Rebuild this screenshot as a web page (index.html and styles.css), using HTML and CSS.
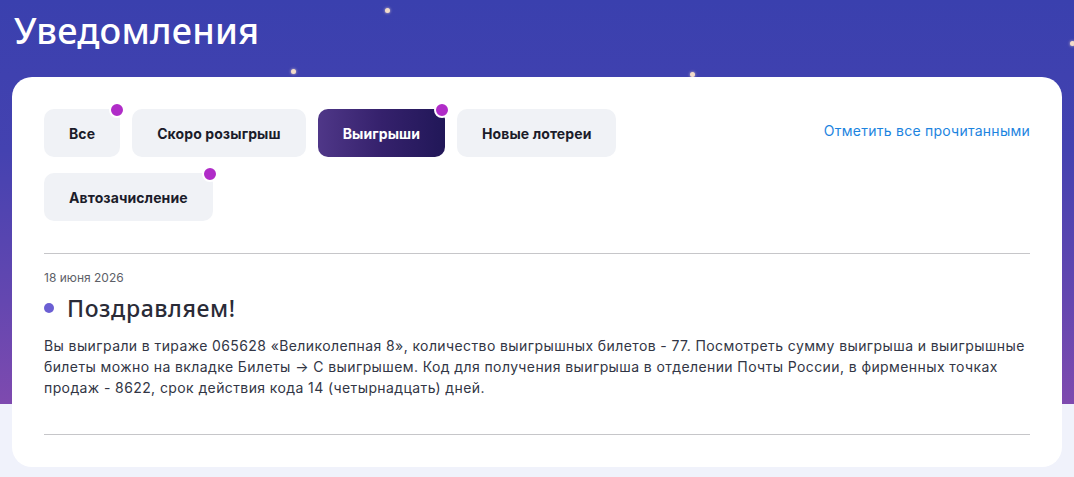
FILE: index.html
```html
<!DOCTYPE html>
<html lang="ru">
<head>
    <meta charset="UTF-8">
    <meta name="viewport" content="width=device-width, initial-scale=1.0">
    <title>Уведомления</title>
    <link rel="stylesheet" href="styles.css">
</head>
<body>
    <div class="stars">
        <span class="star" style="left:385px;top:8px"></span>
        <span class="star" style="left:291px;top:69px"></span>
        <span class="star" style="left:690px;top:72px"></span>
        <span class="star" style="left:1070px;top:41px"></span>
    </div>

    <h1 class="page-title">Уведомления</h1>

    <div class="card">
        <div class="toolbar">
            <div class="tabs">
                <button class="tab has-new">Все</button>
                <button class="tab">Скоро розыгрыш</button>
                <button class="tab active has-new">Выигрыши</button>
                <button class="tab">Новые лотереи</button>
                <button class="tab has-new">Автозачисление</button>
            </div>
            <a class="mark-read" href="#">Отметить все прочитанными</a>
        </div>

        <div class="notice">
            <div class="notice-date">18 июня 2026</div>
            <h3 class="notice-title"><span class="unread-dot"></span>Поздравляем!</h3>
            <p class="notice-text">Вы выиграли в тираже 065628 «Великолепная 8», количество выигрышных билетов - 77. Посмотреть сумму выигрыша и выигрышные билеты можно на вкладке Билеты → С выигрышем. Код для получения выигрыша в отделении Почты России, в фирменных точках продаж - 8622, срок действия кода 14 (четырнадцать) дней.</p>
        </div>
    </div>
</body>
</html>
```

FILE: styles.css
```css
:root {
    --blue: #3a40ae;
    --purple: #7e4aaf;
    --page: #f0f2fb;
    --tab-bg: #f0f2f6;
    --dot: #b02cc8;
    --text: #2b2f3d;
    --link: #1c84df;
}

* {
    margin: 0;
    padding: 0;
    box-sizing: border-box;
}

body {
    font-family: 'Inter', 'Noto Sans', sans-serif;
    color: var(--text);
    min-height: 100vh;
    background: linear-gradient(180deg, var(--blue) 0, #4442b0 150px, #6447b0 300px, var(--purple) 404px, var(--page) 404px);
    padding-bottom: 12px;
}

.stars {
    position: absolute;
    inset: 0;
    pointer-events: none;
}

.star {
    position: absolute;
    width: 5px;
    height: 5px;
    border-radius: 50%;
    background: #f3dcc9;
    box-shadow: 0 0 3px rgba(255,230,210,0.8);
}

.page-title {
    font-family: 'Noto Sans', sans-serif;
    font-weight: 500;
    font-size: 36px;
    line-height: 44px;
    letter-spacing: 0.2px;
    color: #fff;
    padding: 9px 14px 24px;
}

.card {
    position: relative;
    background: #fff;
    margin: 0 12px;
    border-radius: 20px;
    padding: 32px 32px 32px;
}

.toolbar {
    display: flex;
    justify-content: space-between;
    align-items: flex-start;
    gap: 24px;
    padding-bottom: 32px;
    border-bottom: 1px solid #c6c6c9;
}

.tabs {
    display: flex;
    flex-wrap: wrap;
    gap: 16px 12px;
    flex: 1;
    max-width: 740px;
}

.tab {
    position: relative;
    height: 48px;
    padding: 0 25px;
    border: none;
    border-radius: 10px;
    background: var(--tab-bg);
    font-family: 'Inter', sans-serif;
    font-size: 14px;
    font-weight: 700;
    letter-spacing: 0.1px;
    color: #1b1c2a;
    cursor: pointer;
}

.tab.active {
    background: linear-gradient(90deg, #4f3788 0%, #35216c 50%, #211758 100%);
    color: #fff;
}

.tab.has-new::after {
    content: '';
    position: absolute;
    top: -7px;
    right: -5px;
    width: 12px;
    height: 12px;
    border-radius: 50%;
    background: var(--dot);
    border: 2px solid #fff;
}

.mark-read {
    color: var(--link);
    text-decoration: none;
    font-size: 14px;
    letter-spacing: 0.25px;
    line-height: 44px;
    white-space: nowrap;
}

.notice {
    padding: 16px 0 36px;
    border-bottom: 1px solid #c6c6c9;
}

.notice-date {
    font-size: 12px;
    line-height: 16px;
    color: #5d5f68;
}

.notice-title {
    display: flex;
    align-items: center;
    margin: 7px 0 12px;
    font-family: 'Noto Sans', sans-serif;
    font-weight: 500;
    font-size: 23px;
    line-height: 30px;
    letter-spacing: 0.6px;
    color: #2a2b37;
}

.unread-dot {
    width: 10px;
    height: 10px;
    border-radius: 50%;
    background: #6b5fd3;
    margin: 0 13px 0 0;
}

.notice-text {
    font-size: 14px;
    line-height: 21px;
    letter-spacing: 0.4px;
    color: #323645;
}
```
